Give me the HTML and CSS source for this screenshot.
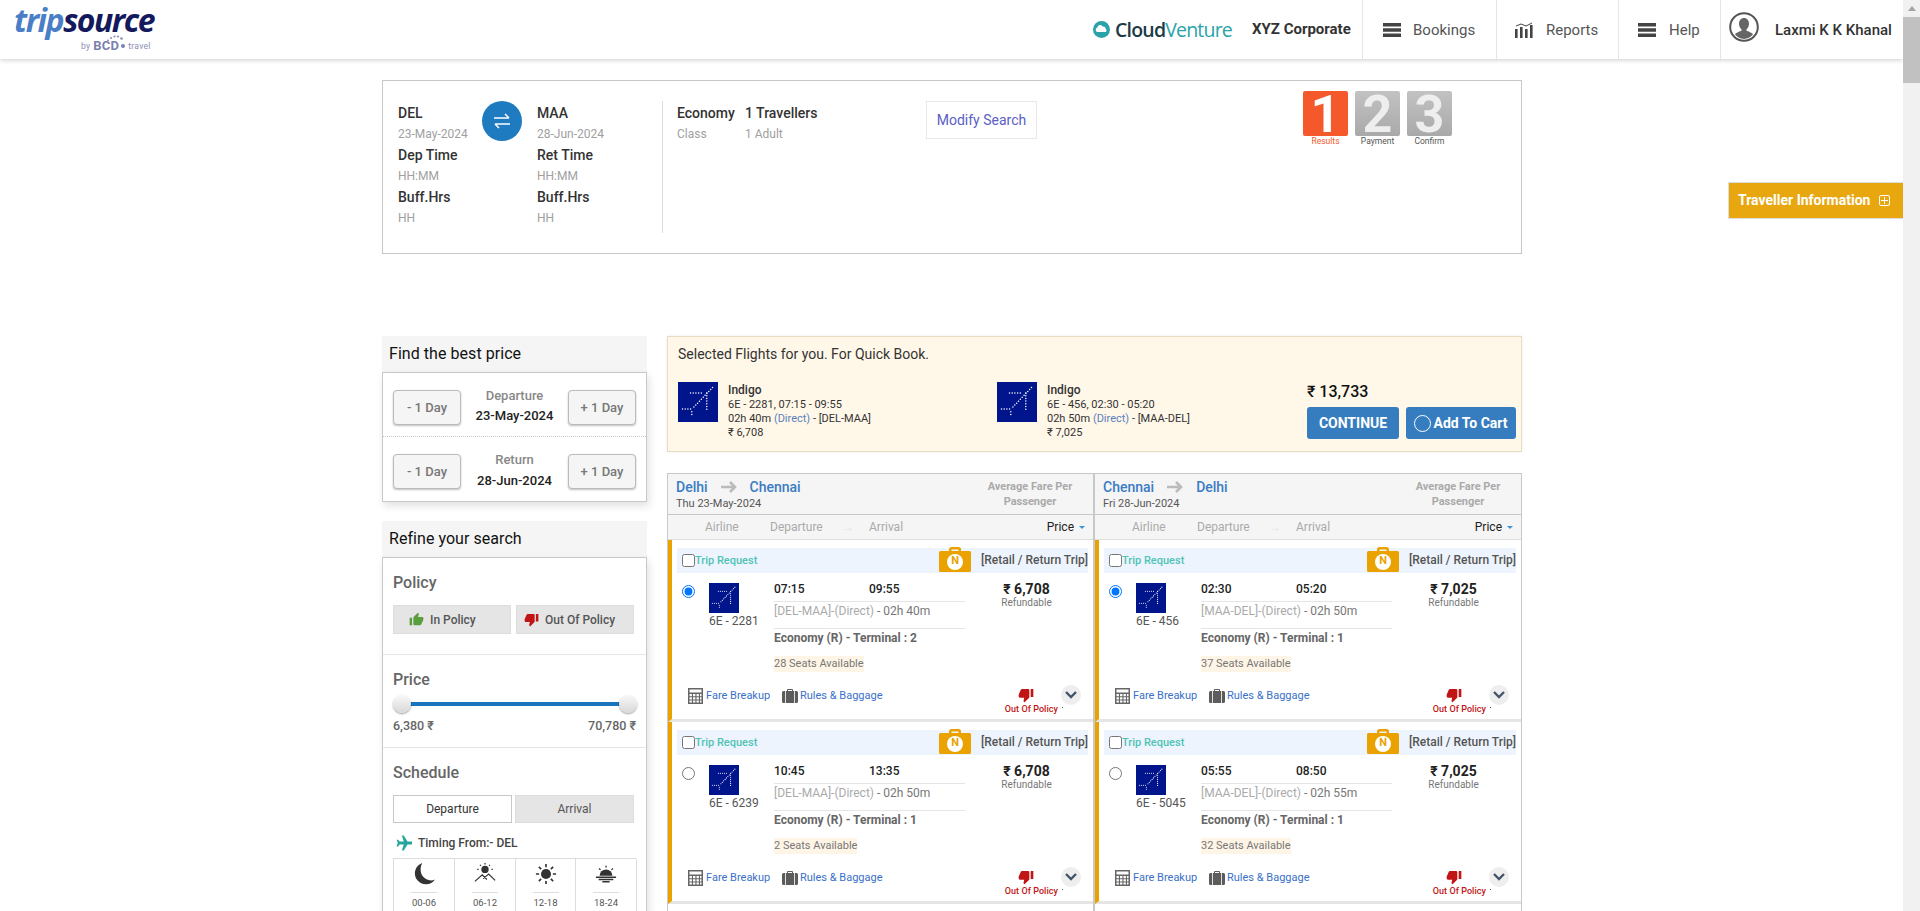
FILE: index.html
```html
<!DOCTYPE html>
<html lang="en">
<head>
<meta charset="utf-8">
<title>TripSource</title>
<link rel="stylesheet" href="styles.css">
</head>
<body>
<svg class="defs" width="0" height="0" aria-hidden="true">
  <symbol id="indigo" viewBox="0 0 40 40">
    <rect width="40" height="40" fill="#00148c"/>
    <g fill="none" stroke="#fff" stroke-width="1.5" stroke-linecap="round" stroke-dasharray="0 2.7">
      <path d="M12.5 11H25"/>
      <path d="M34.500 5.500L15.500 25.500"/>
      <path d="M28.800 11V29"/>
      <path d="M4.500 27H15"/>
      <path d="M13.800 29.700V35"/>
    </g>
  </symbol>
  <symbol id="thumb-up" viewBox="0 0 24 24"><path d="M1 21h4V9H1v12zm22-11c0-1.100-.9-2-2-2h-6.310l.95-4.570.03-.32c0-.41-.17-.79-.44-1.060L14.170 1 7.590 7.590C7.220 7.950 7 8.450 7 9v10c0 1.100.9 2 2 2h9c.83 0 1.540-.5 1.840-1.220l3.020-7.050c.09-.23.14-.47.14-.73v-2z"/></symbol>
  <symbol id="thumb-down" viewBox="0 0 24 24"><path d="M15 3H6c-.83 0-1.540.5-1.840 1.220l-3.020 7.050c-.09.23-.14.47-.14.73v2c0 1.100.9 2 2 2h6.310l-.95 4.570-.03.32c0 .41.17.79.44 1.060L9.830 23l6.590-6.590c.36-.36.58-.86.58-1.410V5c0-1.100-.9-2-2-2zm4 0v12h4V3h-4z"/></symbol>
  <symbol id="menu" viewBox="0 0 18 14"><path d="M0 0h18v3.400H0zM0 5.300h18v3.400H0zM0 10.600h18V14H0z"/></symbol>
  <symbol id="calc" viewBox="0 0 15 16"><path fill="#666" d="M0 0h15v16H0z"/><path fill="#fff" d="M1.500 1.500h12v3h-12zM1.500 6h2.400v2.200H1.500zM5 6h2.400v2.200H5zM8.500 6h2.400v2.200H8.500zM12 6h1.500v2.200H12zM1.500 9.300h2.400v2.200H1.500zM5 9.300h2.400v2.200H5zM8.500 9.300h2.400v2.200H8.500zM12 9.300h1.500v2.200H12zM1.500 12.600h2.400v2H1.500zM5 12.600h2.400v2H5zM8.500 12.600h2.400v2H8.500zM12 12.600h1.500v2H12z"/></symbol>
  <symbol id="bag" viewBox="0 0 16 14"><path fill="#5c5c5c" d="M5 2V1a1 1 0 0 1 1-1h4a1 1 0 0 1 1 1v1h3.500A1.500 1.500 0 0 1 16 3.500v9a1.500 1.500 0 0 1-1.500 1.500h-13A1.500 1.500 0 0 1 0 12.500v-9A1.500 1.500 0 0 1 1.500 2zM6 2h4V1H6z"/><path fill="#fff" d="M3 2h.8v12H3zM12.200 2h.8v12h-.8z"/></symbol>
  <symbol id="case" viewBox="0 0 32 25"><path fill="#e9a200" d="M10 4V2.500A2.500 2.500 0 0 1 12.500 0h7A2.500 2.500 0 0 1 22 2.500V4h8.500A1.500 1.500 0 0 1 32 5.500v18a1.500 1.500 0 0 1-1.500 1.500h-29A1.500 1.500 0 0 1 0 23.500v-18A1.500 1.500 0 0 1 1.500 4zM12.500 4h7V2.500h-7z"/><circle cx="16" cy="15" r="8" fill="#fff"/></symbol>
  <symbol id="chev" viewBox="0 0 12 8"><path fill="none" stroke="#44546a" stroke-width="2.400" d="M1 1l5 5 5-5"/></symbol>
</svg>

<header class="topbar">
  <a class="logo">
    <span class="logo-main"><span class="logo-trip">trip</span>source</span>
    <span class="logo-sub">by <b class="bcd">BCD<svg class="bcd-dots" viewBox="0 0 18 7"><g fill="#8a8db5"><circle cx="2" cy="5.500" r="1"/><circle cx="5" cy="3" r="1"/><circle cx="8.500" cy="1.500" r="1.100"/><circle cx="12" cy="1.500" r="1.100"/><circle cx="15.500" cy="3.500" r="1.300"/></g></svg></b><span class="bcd-dot"></span>travel</span>
  </a>
  <div class="top-right">
    <div class="cv">
      <svg class="cv-icon" viewBox="0 0 20 20"><circle cx="10" cy="10" r="10" fill="#2aa3a8"/><path fill="#fff" d="M5.500 13a2.700 2.700 0 0 1-.3-5.300 3.300 3.300 0 0 1 6.200-1.300 3 3 0 0 1 3.600 3 2 2 0 0 1-.6 3.600z"/></svg>
      <span class="cv-text">Cloud<span class="cv-light">Venture</span></span>
    </div>
    <div class="corp">XYZ Corporate</div>
    <div class="nav nav-book"><svg class="nav-icon"><use href="#menu"/></svg>Bookings</div>
    <div class="nav nav-rep">
      <svg class="nav-icon" viewBox="0 0 18 16"><path fill="#444" d="M0 7h2.600v9H0zM5 5h2.600v11H5zM10 7h2.600v9H10zM15 3h2.600v13H15z"/><path fill="none" stroke="#444" d="M1 4l5-2 5 2 6-3"/></svg>Reports
    </div>
    <div class="nav nav-help"><svg class="nav-icon"><use href="#menu"/></svg>Help</div>
    <div class="nav nav-user">
      <svg class="avatar" viewBox="0 0 30 30"><circle cx="15" cy="15" r="13.800" fill="#fff" stroke="#555" stroke-width="2"/><path fill="#666" d="M15 6c3.200 0 5 2.500 5 5.800 0 2.400-1 4.400-2.500 5.500v1.400c3 1.200 5.600 2 6.500 3.800A13 13 0 0 1 15 27a13 13 0 0 1-9-4.500c.9-1.800 3.500-2.600 6.500-3.800v-1.400C11 16.200 10 14.200 10 11.800 10 8.500 11.800 6 15 6z"/></svg>
      <span class="user-name">Laxmi K K Khanal</span>
    </div>
  </div>
</header>

<aside class="traveller">Traveller Information<span class="plus-box"></span></aside>
<div class="scrollbar"><span class="sb-up"></span><span class="sb-thumb"></span></div>

<main class="container">
  <section class="summary">
    <div class="route-col">
      <div class="lab">DEL</div><div class="sub">23-May-2024</div>
      <div class="lab">Dep Time</div><div class="sub">HH:MM</div>
      <div class="lab">Buff.Hrs</div><div class="sub">HH</div>
    </div>
    <div class="swap">
      <svg viewBox="0 0 18 18" width="18" height="18"><path fill="none" stroke="#fff" stroke-width="1.500" d="M1 6h15M12 2l4 4M17 12H2M6 16l-4-4"/></svg>
    </div>
    <div class="route-col route-col-ret">
      <div class="lab">MAA</div><div class="sub">28-Jun-2024</div>
      <div class="lab">Ret Time</div><div class="sub">HH:MM</div>
      <div class="lab">Buff.Hrs</div><div class="sub">HH</div>
    </div>
    <div class="class-col">
      <div class="class-item class-eco"><div class="lab">Economy</div><div class="sub">Class</div></div>
      <div class="class-item class-trav"><div class="lab">1 Travellers</div><div class="sub">1 Adult</div></div>
    </div>
    <button class="modify">Modify Search</button>
    <div class="steps">
      <div class="step step-on"><span class="step-num">1</span><span class="step-lab">Results</span></div>
      <div class="step"><span class="step-num">2</span><span class="step-lab">Payment</span></div>
      <div class="step"><span class="step-num">3</span><span class="step-lab">Confirm</span></div>
    </div>
  </section>

  <div class="columns">
    <div class="side">
      <h3 class="side-head">Find the best price</h3>
      <div class="side-box price-box">
        <div class="day-row">
          <button class="day-btn">- 1 Day</button>
          <div class="day-mid"><div class="day-lab">Departure</div><div class="day-date">23-May-2024</div></div>
          <button class="day-btn">+ 1 Day</button>
        </div>
        <div class="day-row day-row-2">
          <button class="day-btn">- 1 Day</button>
          <div class="day-mid"><div class="day-lab">Return</div><div class="day-date">28-Jun-2024</div></div>
          <button class="day-btn">+ 1 Day</button>
        </div>
      </div>

      <h3 class="side-head side-head-2">Refine your search</h3>
      <div class="side-box">
        <div class="filter filter-policy">
          <div class="filter-title">Policy</div>
          <div class="policy-btns">
            <button class="pol-btn"><svg class="pol-ic pol-up"><use href="#thumb-up"/></svg>In Policy</button>
            <button class="pol-btn pol-btn-out"><svg class="pol-ic pol-down"><use href="#thumb-down"/></svg>Out Of Policy</button>
          </div>
        </div>
        <div class="filter filter-price">
          <div class="filter-title">Price</div>
          <div class="slider"><span class="knob"></span><span class="track"></span><span class="knob"></span></div>
          <div class="range"><span>6,380 ₹</span><span>70,780 ₹</span></div>
        </div>
        <div class="filter filter-sched">
          <div class="filter-title">Schedule</div>
          <div class="tabs"><button class="tab tab-on">Departure</button><button class="tab">Arrival</button></div>
          <div class="timing">
            <svg class="plane" viewBox="0 0 24 24"><path fill="#26a69a" d="M10.500 22h2.500l5-8h5.500a1.500 1.500 0 0 0 0-4H18L13 2h-2.500l2.500 8H7.500L5.500 7.500H3.500L5 12l-1.500 4.500h2L7.500 14H13z"/></svg>
            Timing From:- DEL
          </div>
          <div class="slots">
            <div class="slot"><svg class="slot-ic" viewBox="0 0 24 24"><path fill="#333" d="M10 0a12 12 0 1 0 14 18C15 22 4 13 10 0z"/></svg><span class="slot-lab">00-06</span></div>
            <div class="slot"><svg class="slot-ic" viewBox="0 0 24 24"><circle cx="12" cy="7" r="4" fill="#333"/><path fill="none" stroke="#333" stroke-width="1.300" d="M1 20l8-7 5 5M10 17l6-5 7 7M12 0v1.500M5 7H3.500M20.500 7H19M6.500 2l1 1M17.500 2l-1 1"/></svg><span class="slot-lab">06-12</span></div>
            <div class="slot"><svg class="slot-ic" viewBox="0 0 24 24"><circle cx="12" cy="12" r="5.500" fill="#333"/><path stroke="#333" stroke-width="1.800" d="M12 1v3.500M12 19.500V23M1 12h3.500M19.500 12H23M4.200 4.200l2.500 2.500M17.300 17.300l2.500 2.500M4.200 19.800l2.500-2.500M17.300 6.700l2.500-2.500"/></svg><span class="slot-lab">12-18</span></div>
            <div class="slot"><svg class="slot-ic" viewBox="0 0 24 24"><path fill="#333" d="M5 14a7 7 0 0 1 14 0z"/><path stroke="#333" stroke-width="1.500" d="M1 15.500h22M4 18h16M8 20.500h8M12 3v2M4.500 6l1.500 1.500M19.500 6L18 7.500"/></svg><span class="slot-lab">18-24</span></div>
          </div>
        </div>
      </div>
    </div>

    <div class="results">
      <section class="quick">
        <div class="quick-title">Selected Flights for you. For Quick Book.</div>
        <div class="quick-row">
          <div class="quick-flight">
            <svg class="q-logo"><use href="#indigo"/></svg>
            <div class="q-info"><div class="q-name">Indigo</div><div>6E - 2281, 07:15 - 09:55</div><div>02h 40m <span class="q-link">(Direct)</span> - [DEL-MAA]</div><div>₹ 6,708</div></div>
          </div>
          <div class="quick-flight">
            <svg class="q-logo"><use href="#indigo"/></svg>
            <div class="q-info"><div class="q-name">Indigo</div><div>6E - 456, 02:30 - 05:20</div><div>02h 50m <span class="q-link">(Direct)</span> - [MAA-DEL]</div><div>₹ 7,025</div></div>
          </div>
          <div class="quick-total">
            <div class="total-amt">₹ 13,733</div>
            <div class="total-btns"><button class="cta cta-go">CONTINUE</button><button class="cta cta-cart"><span class="ring"></span>Add To Cart</button></div>
          </div>
        </div>
      </section>

      <div class="lists">
        <div class="list">
          <div class="list-head">
            <div class="lh-left">
              <div class="lh-route"><span class="city">Delhi</span><span class="lh-arrow"><svg viewBox="0 0 16 12" width="16" height="12"><path fill="none" stroke="#bbb" stroke-width="2.600" d="M0 6h14M9 1l5 5-5 5"/></svg></span><span class="city">Chennai</span></div>
              <div class="lh-date">Thu 23-May-2024</div>
            </div>
            <div class="lh-avg">Average Fare Per<br>Passenger</div>
          </div>
          <div class="sortbar">
            <span class="s-air">Airline</span><span class="s-dep">Departure</span><span class="s-arrow">→</span><span class="s-arr">Arrival</span><span class="s-price">Price<span class="caret"></span></span>
          </div>
          <article class="card">
            <div class="strip"><input class="chk" type="checkbox"><span class="trip">Trip Request</span><span class="case"><svg class="case-ic"><use href="#case"/></svg><span class="case-n">N</span></span><span class="retail">[Retail / Return Trip]</span></div>
            <div class="body">
              <input class="rad" type="radio" checked name="a">
              <div class="air"><svg class="air-logo"><use href="#indigo"/></svg><div class="fno">6E - 2281</div></div>
              <div class="mid">
                <div class="times"><span class="t1">07:15</span><span>09:55</span></div>
                <div class="routeline"><span class="faint">[DEL-MAA]-(Direct)</span> - 02h 40m</div>
                <div class="cabin">Economy (R) - Terminal : 2</div>
                <span class="seats">28 Seats Available</span>
              </div>
              <div class="fare"><div class="amt">₹ 6,708</div><div class="ref">Refundable</div></div>
            </div>
            <div class="foot">
              <a class="flink flink-fare"><svg class="ic-calc"><use href="#calc"/></svg>Fare Breakup</a>
              <a class="flink"><svg class="ic-bag"><use href="#bag"/></svg>Rules &amp; Baggage</a>
              <div class="oop"><svg class="oop-ic"><use href="#thumb-down"/></svg><span>Out Of Policy</span></div>
              <span class="more"><svg class="chev"><use href="#chev"/></svg></span>
            </div>
          </article>
          <article class="card">
            <div class="strip"><input class="chk" type="checkbox"><span class="trip">Trip Request</span><span class="case"><svg class="case-ic"><use href="#case"/></svg><span class="case-n">N</span></span><span class="retail">[Retail / Return Trip]</span></div>
            <div class="body">
              <input class="rad" type="radio" name="a">
              <div class="air"><svg class="air-logo"><use href="#indigo"/></svg><div class="fno">6E - 6239</div></div>
              <div class="mid">
                <div class="times"><span class="t1">10:45</span><span>13:35</span></div>
                <div class="routeline"><span class="faint">[DEL-MAA]-(Direct)</span> - 02h 50m</div>
                <div class="cabin">Economy (R) - Terminal : 1</div>
                <span class="seats">2 Seats Available</span>
              </div>
              <div class="fare"><div class="amt">₹ 6,708</div><div class="ref">Refundable</div></div>
            </div>
            <div class="foot">
              <a class="flink flink-fare"><svg class="ic-calc"><use href="#calc"/></svg>Fare Breakup</a>
              <a class="flink"><svg class="ic-bag"><use href="#bag"/></svg>Rules &amp; Baggage</a>
              <div class="oop"><svg class="oop-ic"><use href="#thumb-down"/></svg><span>Out Of Policy</span></div>
              <span class="more"><svg class="chev"><use href="#chev"/></svg></span>
            </div>
          </article>
        </div>

        <div class="list list-2">
          <div class="list-head">
            <div class="lh-left">
              <div class="lh-route"><span class="city">Chennai</span><span class="lh-arrow"><svg viewBox="0 0 16 12" width="16" height="12"><path fill="none" stroke="#bbb" stroke-width="2.600" d="M0 6h14M9 1l5 5-5 5"/></svg></span><span class="city">Delhi</span></div>
              <div class="lh-date">Fri 28-Jun-2024</div>
            </div>
            <div class="lh-avg">Average Fare Per<br>Passenger</div>
          </div>
          <div class="sortbar">
            <span class="s-air">Airline</span><span class="s-dep">Departure</span><span class="s-arrow">→</span><span class="s-arr">Arrival</span><span class="s-price">Price<span class="caret"></span></span>
          </div>
          <article class="card">
            <div class="strip"><input class="chk" type="checkbox"><span class="trip">Trip Request</span><span class="case"><svg class="case-ic"><use href="#case"/></svg><span class="case-n">N</span></span><span class="retail">[Retail / Return Trip]</span></div>
            <div class="body">
              <input class="rad" type="radio" checked name="b">
              <div class="air"><svg class="air-logo"><use href="#indigo"/></svg><div class="fno">6E - 456</div></div>
              <div class="mid">
                <div class="times"><span class="t1">02:30</span><span>05:20</span></div>
                <div class="routeline"><span class="faint">[MAA-DEL]-(Direct)</span> - 02h 50m</div>
                <div class="cabin">Economy (R) - Terminal : 1</div>
                <span class="seats">37 Seats Available</span>
              </div>
              <div class="fare"><div class="amt">₹ 7,025</div><div class="ref">Refundable</div></div>
            </div>
            <div class="foot">
              <a class="flink flink-fare"><svg class="ic-calc"><use href="#calc"/></svg>Fare Breakup</a>
              <a class="flink"><svg class="ic-bag"><use href="#bag"/></svg>Rules &amp; Baggage</a>
              <div class="oop"><svg class="oop-ic"><use href="#thumb-down"/></svg><span>Out Of Policy</span></div>
              <span class="more"><svg class="chev"><use href="#chev"/></svg></span>
            </div>
          </article>
          <article class="card">
            <div class="strip"><input class="chk" type="checkbox"><span class="trip">Trip Request</span><span class="case"><svg class="case-ic"><use href="#case"/></svg><span class="case-n">N</span></span><span class="retail">[Retail / Return Trip]</span></div>
            <div class="body">
              <input class="rad" type="radio" name="b">
              <div class="air"><svg class="air-logo"><use href="#indigo"/></svg><div class="fno">6E - 5045</div></div>
              <div class="mid">
                <div class="times"><span class="t1">05:55</span><span>08:50</span></div>
                <div class="routeline"><span class="faint">[MAA-DEL]-(Direct)</span> - 02h 55m</div>
                <div class="cabin">Economy (R) - Terminal : 1</div>
                <span class="seats">32 Seats Available</span>
              </div>
              <div class="fare"><div class="amt">₹ 7,025</div><div class="ref">Refundable</div></div>
            </div>
            <div class="foot">
              <a class="flink flink-fare"><svg class="ic-calc"><use href="#calc"/></svg>Fare Breakup</a>
              <a class="flink"><svg class="ic-bag"><use href="#bag"/></svg>Rules &amp; Baggage</a>
              <div class="oop"><svg class="oop-ic"><use href="#thumb-down"/></svg><span>Out Of Policy</span></div>
              <span class="more"><svg class="chev"><use href="#chev"/></svg></span>
            </div>
          </article>
        </div>
      </div>
    </div>
  </div>
</main>
</body>
</html>
```
FILE: styles.css
```css
* { box-sizing: border-box; }
html, body { margin: 0; padding: 0; height: 911px; overflow: hidden; background: #fff; }
body { font-family: Roboto, "Liberation Sans", sans-serif; font-size: 12px; color: #333; width: 1903px; }
.defs { position: absolute; }
button { font-family: inherit; cursor: pointer; padding: 0; }
h3 { margin: 0; }

/* header */
.topbar { display: flex; height: 59px; background: #fff; box-shadow: 0 1px 5px rgba(0,0,0,.2); }
.logo { display: flex; flex-direction: column; padding: 4px 0 0 14px; width: 180px; }
.logo-main { font: italic 700 32px/32px "Open Sans", sans-serif; color: #14195e; letter-spacing: -1.5px; }
.logo-trip { color: #4a7ec7; }
.logo-sub { display: flex; align-items: center; font: 8.500px/14px Roboto, sans-serif; color: #8a8db5; margin: 3px 0 0 67px; letter-spacing: .3px; white-space: nowrap; }
.bcd { position: relative; font-size: 13px; font-weight: 700; color: #7d80ae; margin-left: 3px; letter-spacing: .2px; }
.bcd-dots { position: absolute; left: 13px; top: -4px; width: 18px; height: 7px; }
.bcd-dot { width: 4px; height: 4px; border-radius: 50%; background: #7d80ae; margin: 0 3px 0 2px; }
.top-right { display: flex; margin-left: auto; align-items: stretch; }
.cv { display: flex; align-items: center; width: 159px; }
.cv-icon { width: 17px; height: 17px; margin-right: 5px; }
.cv-text { font: 600 19.500px/24px "Open Sans", sans-serif; color: #1d3b44; letter-spacing: -.8px; }
.cv-light { color: #2aa3a8; font-weight: 400; }
.corp { width: 110px; font-size: 15px; font-weight: 700; color: #333; line-height: 59px; white-space: nowrap; }
.nav { display: flex; align-items: center; border-left: 1px solid #e5e5e5; font-size: 15px; color: #555; white-space: nowrap; }
.nav-icon { width: 18px; height: 14px; fill: #444; margin-right: 12px; }
.nav-book { width: 134px; padding-left: 20px; }
.nav-rep { width: 122px; padding-left: 18px; }
.nav-rep .nav-icon { height: 16px; margin-right: 13px; }
.nav-help { width: 102px; padding-left: 19px; }
.nav-help .nav-icon { margin-right: 13px; }
.nav-user { width: 183px; padding-left: 8px; }
.avatar { width: 30px; height: 30px; margin: -6px 16px 0 0; }
.user-name { font-size: 15px; font-weight: 500; color: #333; }

/* overlays */
.traveller { position: fixed; left: 1728px; top: 182px; width: 175px; height: 37px; background: #e9a70f; color: #fff; font-size: 14px; font-weight: 700; line-height: 34px; padding-left: 9px; border: 1px solid #ddd; border-right: 0; white-space: nowrap; }
.plus-box { display: inline-block; position: relative; width: 11px; height: 11px; margin-left: 9px; border: 1px solid #fff; border-radius: 2px; vertical-align: -1px; }
.plus-box::before { content: ""; position: absolute; left: 1px; right: 1px; top: 4px; height: 1px; background: #fff; }
.plus-box::after { content: ""; position: absolute; top: 1px; bottom: 1px; left: 4px; width: 1px; background: #fff; }
.scrollbar { position: fixed; left: 1903px; top: 0; width: 17px; height: 911px; background: #f1f1f1; }
.sb-up { display: block; width: 0; height: 0; margin: 6px auto 0; border: 4px solid transparent; border-top: 0; border-bottom: 5px solid #a3a3a3; }
.sb-thumb { display: block; margin-top: 6px; height: 66px; background: #c1c1c1; }

/* main */
.container { width: 1140px; margin: 21px 0 0 382px; }

/* summary */
.summary { display: flex; height: 174px; border: 1px solid #c8c8c8; padding: 21px 0 0 15px; }
.route-col { width: 84px; }
.swap { width: 40px; height: 40px; border-radius: 50%; background: #1e7bc0; margin: -1px 15px 0 0; display: flex; align-items: center; justify-content: center; }
.route-col-ret { width: 126px; height: 132px; margin-top: -1px; padding-top: 1px; border-right: 1px solid #ddd; }
.lab { font-size: 14px; font-weight: 500; line-height: 23px; color: #333; white-space: nowrap; }
.sub { font-size: 12px; line-height: 19px; color: #a0a0a0; white-space: nowrap; }
.class-col { display: flex; padding-left: 14px; width: 263px; }
.class-item { flex: none; }
.class-eco { width: 68px; }
.modify { width: 111px; height: 38px; margin-top: -1px; background: #fff; border: 1px solid #e8e8e8; color: #5a60c4; font-size: 14px; }
.steps { display: flex; gap: 7px; margin: -11px 0 0 266px; }
.step { width: 45px; display: flex; flex-direction: column; align-items: center; }
.step-num { display: block; width: 45px; height: 45px; background: linear-gradient(#c2c2c2, #a9a9a9); border-radius: 2px; color: #eee; font: 700 52px/47px Roboto, sans-serif; text-align: center; }
.step-on .step-num { background: #f4582b; color: #fff; }
.step-lab { font-size: 8.500px; line-height: 11px; color: #555; }
.step-on .step-lab { color: #f4582b; }

.columns { display: flex; gap: 20px; margin-top: 82px; }
.side { width: 265px; flex: none; }
.side-head { height: 36px; background: #f5f5f5; padding-left: 7px; font-size: 16px; font-weight: 400; line-height: 35px; color: #111; letter-spacing: .05px; }
.side-head-2 { margin-top: 19px; }
.side-box { border: 1px solid #c8c8c8; background: #fff; box-shadow: 2px 4px 8px rgba(0,0,0,.12); }
.price-box { height: 130px; }
.day-row { display: flex; justify-content: space-between; padding: 17px 10px 12px; height: 64px; border-bottom: 1px dotted #c8c8c8; }
.day-row-2 { border-bottom: 0; height: 64px; }
.day-btn { width: 68px; height: 35px; background: #f5f5f5; border: 1px solid #bbb; border-radius: 4px; box-shadow: 0 1px 2px rgba(0,0,0,.25); color: #777; font-size: 13px; font-weight: 500; }
.day-mid { text-align: center; }
.day-lab { font-size: 13px; font-weight: 500; color: #888; line-height: 16px; margin-top: -2px; }
.day-date { font-size: 13px; font-weight: 500; color: #222; line-height: 18px; margin-top: 3px; }
.day-row-2 .day-date { margin-top: 4px; }

.filter { padding: 15px 10px 0; border-bottom: 1px solid #e5e5e5; }
.filter-title { font-size: 16px; font-weight: 500; color: #666; line-height: 20px; }
.policy-btns { display: flex; gap: 5px; margin-top: 12px; padding-bottom: 20px; }
.pol-btn { width: 118px; height: 29px; background: #e5e5e5; border: 1px solid #ddd; color: #555; font-size: 12px; font-weight: 500; display: flex; align-items: center; padding-left: 15px; }
.pol-btn-out { padding-left: 7px; }
.pol-ic { width: 15px; height: 15px; margin-right: 6px; }
.pol-up { fill: #5a9e3e; }
.pol-down { fill: #c11414; }
.filter-price { height: 93px; }
.slider { display: flex; align-items: center; height: 18px; margin: 5px -1px 0 0; }
.knob { width: 18px; height: 18px; flex: none; border-radius: 50%; background: linear-gradient(#f8f8f8, #d8d8d8); box-shadow: 0 1px 2px rgba(0,0,0,.4); position: relative; z-index: 1; }
.track { flex: 1; height: 4px; background: #1c75bc; margin: 0 -1px; }
.range { display: flex; justify-content: space-between; margin: 6px 0 0; font-size: 12.500px; font-weight: 500; color: #666; line-height: 14px; width: 243px; }
.filter-sched { border-bottom: 0; }
.tabs { display: flex; gap: 3px; margin-top: 12px; }
.tab { width: 119px; height: 28px; background: #e5e5e5; border: 1px solid #ddd; color: #555; font-size: 12px; }
.tab-on { background: #fff; border-color: #c8c8c8; color: #333; }
.timing { display: flex; align-items: center; height: 20px; margin-top: 10px; font-size: 12px; font-weight: 500; color: #444; padding-left: 1px; }
.plane { width: 18px; height: 18px; margin-right: 6px; }
.slots { display: grid; grid-template-columns: 61px 61px 60px 61px; width: 243px; margin-top: 5px; border: 1px solid #ddd; border-width: 1px 0 0 1px; }
.slot { display: flex; flex-direction: column; align-items: center; height: 60px; border-right: 1px solid #ddd; padding-top: 4px; }
.slot-ic { width: 22px; height: 22px; }
.slot-lab { border-top: 1px solid #ddd; margin-top: 7px; padding-top: 4px; font-size: 9.500px; color: #555; width: 26px; text-align: center; white-space: nowrap; }

/* results */
.results { flex: 1; min-width: 0; }
.quick { height: 116px; background: #fff7e8; border: 1px solid #eadcc2; box-shadow: 0 0 3px rgba(0,0,0,.08); padding: 8px 5px 0 10px; }
.quick-title { font-size: 14px; line-height: 18px; color: #333; }
.quick-row { display: flex; margin-top: 19px; }
.quick-flight { display: flex; width: 319px; flex: none; }
.q-logo { width: 40px; height: 40px; flex: none; margin-right: 10px; }
.q-info { font-size: 11px; line-height: 14px; color: #333; white-space: nowrap; margin-top: 1px; }
.q-name { font-size: 12px; font-weight: 500; margin-bottom: 1px; }
.q-link { color: #5b7fbe; }
.quick-total { margin-left: -9px; }
.total-amt { font-size: 16px; font-weight: 500; color: #111; line-height: 20px; }
.total-btns { display: flex; gap: 7px; margin-top: 5px; }
.cta { height: 32px; border: 0; border-radius: 3px; background: #367dbf; color: #fff; font-size: 14px; font-weight: 700; }
.cta-go { width: 92px; }
.cta-cart { width: 110px; display: flex; align-items: center; justify-content: center; font-size: 14px; }
.ring { width: 17px; height: 17px; border: 1.500px solid #fff; border-radius: 50%; margin-right: 2px; }

.lists { display: flex; margin-top: 21px; height: 438px; overflow: hidden; }
.list { width: 427px; flex: none; border: 1px solid #c8c8c8; border-width: 1px 1px 0 1px; }
.list-2 { width: 428px; }
.list-head { display: flex; height: 41px; background: #f5f5f5; border-bottom: 1px solid #c8c8c8; padding: 4px 0 0 8px; justify-content: space-between; }
.lh-route { display: flex; align-items: center; height: 18px; }
.city { font-size: 14px; font-weight: 500; color: #3a7cc4; }
.lh-arrow { display: flex; width: 42px; justify-content: center; }
.lh-date { font-size: 11px; line-height: 15px; color: #555; }
.lh-avg { width: 120px; margin: 1px 3px 0 0; font-size: 11px; font-weight: 700; color: #aaa; text-align: center; line-height: 15px; }
.sortbar { display: flex; align-items: center; height: 25px; background: #f5f5f5; border-bottom: 1px solid #ddd; font-size: 12px; color: #aaa; padding-left: 37px; }
.s-air { width: 65px; }
.s-dep { width: 72px; }
.s-arrow { width: 27px; color: #e4e4e4; }
.s-arr { width: 60px; }
.s-price { margin-left: auto; margin-right: 8px; color: #222; display: inline-flex; align-items: center; }
.caret { width: 0; height: 0; margin-left: 5px; border: 3.500px solid transparent; border-top: 3.500px solid #3498db; border-bottom: 0; }

.card { height: 182px; border-left: 4px solid #e9a200; border-bottom: 3px solid #e5e5e5; padding-top: 8px; }
.strip { display: flex; align-items: center; height: 25px; margin: 0 5px; padding: 0 0 1px 5px; background: #eef4fd; }
.chk { width: 13px; height: 13px; margin: 0; flex: none; }
.trip { font-size: 11px; font-weight: 500; color: #4fc3b5; }
.case { position: relative; width: 32px; height: 25px; margin-left: auto; display: block; top: -1px; }
.case-ic { width: 32px; height: 25px; display: block; }
.case-n { position: absolute; left: 0; right: 0; top: 7px; text-align: center; font-size: 11px; line-height: 14px; font-weight: 700; color: #e9a200; }
.retail { margin-left: 10px; font-size: 12px; font-weight: 500; color: #555; white-space: nowrap; }
.body { display: flex; height: 114px; padding: 9px 0 0 10px; }
.rad { width: 13px; height: 13px; margin: 3px 14px 0 0; flex: none; }
.air { width: 65px; flex: none; }
.air-logo { display: block; width: 30px; height: 30px; margin-top: 1px; }
.fno { font-size: 12px; line-height: 16px; color: #555; }
.mid { width: 191px; flex: none; }
.times { height: 20px; border-bottom: 1px solid #e5e5e5; font-size: 12px; font-weight: 500; color: #222; line-height: 14px; display: flex; }
.t1 { width: 95px; }
.routeline { height: 27px; border-bottom: 1px solid #e5e5e5; font-size: 12px; line-height: 18px; color: #777; }
.faint { color: #aaa; }
.cabin { font-size: 12px; font-weight: 700; color: #666; line-height: 18px; }
.seats { display: inline-block; margin-top: 9px; height: 16px; line-height: 16px; background: #fff5e6; font-size: 11px; color: #777; }
.fare { width: 123px; flex: none; text-align: center; }
.amt { font-size: 14px; font-weight: 700; color: #222; line-height: 14px; }
.ref { font-size: 10px; line-height: 12px; color: #777; margin-top: 1px; }
.foot { display: flex; height: 33px; padding: 0 12px 0 16px; }
.flink { display: flex; align-items: center; height: 17px; font-size: 11px; color: #3a70c8; white-space: nowrap; }
.flink-fare { width: 94px; }
.ic-calc { width: 15px; height: 16px; margin-right: 3px; }
.ic-bag { width: 16px; height: 14px; margin-right: 2px; }
.oop { margin-left: auto; display: flex; flex-direction: column; align-items: center; margin-right: 3px; font-size: 9px; font-weight: 500; color: #c11414; line-height: 13px; letter-spacing: .05px; white-space: nowrap; }
.oop-ic { width: 16px; height: 16px; fill: #c11414; margin-right: 10px; }
.more { position: relative; width: 20px; height: 20px; border-radius: 50%; background: #eee; display: flex; align-items: center; justify-content: center; margin-top: -2px; }
.more::after { content: ""; position: absolute; left: 1px; top: 22px; width: 1px; height: 1px; background: #555; }
.chev { width: 12px; height: 8px; }
```
